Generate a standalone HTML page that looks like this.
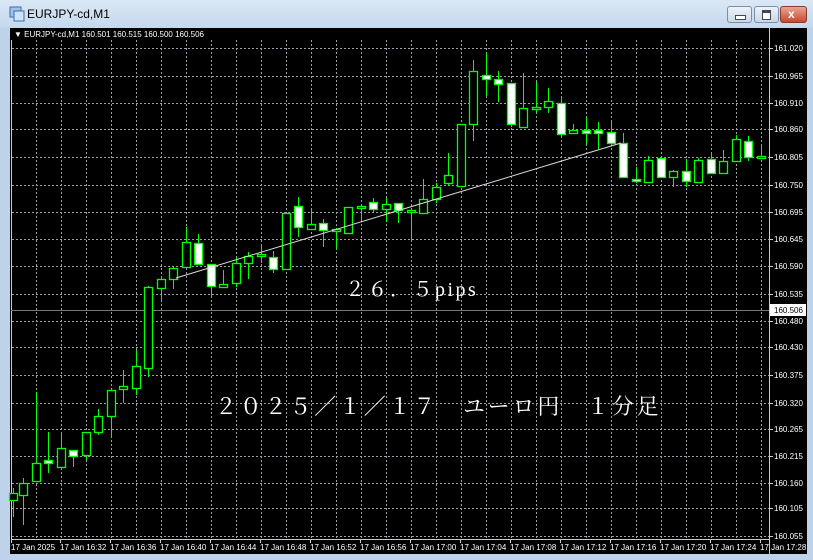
<!DOCTYPE html>
<html><head><meta charset="utf-8"><style>
html,body{margin:0;padding:0;width:813px;height:560px;overflow:hidden;background:#bcd3ea;font-family:"Liberation Sans",sans-serif}
#title{position:absolute;left:0;top:0;width:813px;height:28px;background:linear-gradient(#dbe8f5,#c4d8ee)}
#tt{position:absolute;left:27px;top:7px;font-size:12px;color:#000}
.btn{position:absolute;top:6px;height:15px;border:1px solid #7c8ea6;border-radius:3px;background:linear-gradient(#eef3f9,#c9d7e8)}
#chart{position:absolute;left:10px;top:28px;width:797px;height:526px;background:#000}
svg text{font-family:"Liberation Sans",sans-serif}
</style></head><body>
<div id="title">
<svg style="position:absolute;left:9px;top:6px" width="16" height="16"><rect x="1" y="1" width="11" height="10" fill="#9fc3e8" stroke="#3b6ea5"/><rect x="5" y="5" width="10" height="10" fill="#cfe3f7" stroke="#3b6ea5"/></svg>
<div id="tt">EURJPY-cd,M1</div>
<div class="btn" style="left:727px;width:23px"><div style="position:absolute;left:7px;top:8px;width:9px;height:3px;background:#fff;border:1px solid #445"></div></div>
<div class="btn" style="left:754px;width:23px"><div style="position:absolute;left:7px;top:3px;width:7px;height:6px;border:1px solid #445;border-top:3px solid #445;background:#fff"></div></div>
<div class="btn" style="left:780px;width:25px;background:linear-gradient(#e9a393,#c6492f);border-color:#8b3a2c"><div style="position:absolute;left:7px;top:0px;color:#fff;font-weight:bold;font-size:12px">x</div></div>
</div>
<div id="chart"></div>
<svg id="s" style="position:absolute;left:0;top:0" width="813" height="560"></svg>
<div style="position:absolute;left:345px;top:273px;color:#fff;font-family:'Liberation Serif','Noto Serif CJK JP',serif;font-size:20px;letter-spacing:2.5px;white-space:nowrap">２６．５pips</div>
<div style="position:absolute;left:215px;top:390px;color:#fff;font-family:'Liberation Serif','Noto Serif CJK JP',serif;font-size:22px;letter-spacing:2.8px;white-space:nowrap">２０２５／１／１７　ユーロ円　１分足</div>
<script>
var s='';
var py=[["161.020",48],["160.965",76],["160.910",103],["160.860",129],["160.805",157],["160.750",185],["160.695",212],["160.645",239],["160.590",266],["160.535",294],["160.480",321],["160.430",347],["160.375",375],["160.320",403],["160.265",429],["160.215",456],["160.160",483],["160.105",508],["160.055",536]];
py.forEach(function(p){s+='<line x1="12" x2="769" y1="'+(p[1]+.5)+'" y2="'+(p[1]+.5)+'" stroke="#9a9fa8" stroke-dasharray="2,2"/>';s+='<line x1="769" x2="773" y1="'+(p[1]+.5)+'" y2="'+(p[1]+.5)+'" stroke="#ccc"/>';s+='<text x="774" y="'+(p[1]+3)+'" font-size="8" fill="#fff">'+p[0]+'</text>';});
for(var k=0;k<30;k++){var x=36+25*k+.5;s+='<line x1="'+x+'" x2="'+x+'" y1="40" y2="539" stroke="#9a9fa8" stroke-dasharray="2,2"/>';}
s+='<line x1="11.5" x2="11.5" y1="40" y2="539" stroke="#ccc"/><line x1="11" x2="770" y1="539.5" y2="539.5" stroke="#ccc"/><line x1="769.5" x2="769.5" y1="28" y2="554" stroke="#ccc"/>';
s+='<line x1="11" x2="769" y1="310.5" y2="310.5" stroke="#777"/>';
s+='<rect x="770" y="304" width="36" height="12" fill="#fff"/><text x="774" y="313" font-size="8" fill="#000">160.506</text>';
var t=["17 Jan 2025","17 Jan 16:32","17 Jan 16:36","17 Jan 16:40","17 Jan 16:44","17 Jan 16:48","17 Jan 16:52","17 Jan 16:56","17 Jan 17:00","17 Jan 17:04","17 Jan 17:08","17 Jan 17:12","17 Jan 17:16","17 Jan 17:20","17 Jan 17:24","17 Jan 17:28"];
t.forEach(function(l,i){var x=i==0?11:10+50*i;s+='<line x1="'+(x+.5)+'" x2="'+(x+.5)+'" y1="539" y2="543" stroke="#ccc"/><text x="'+x+'" y="550" font-size="8" fill="#fff">'+l+'</text>';});
s+='<text x="14" y="37" font-size="8" fill="#fff">▼ EURJPY-cd,M1  160.501 160.515 160.500 160.506</text>';
var d=[[13,488,517,493,500,1],[23,478,525,483,495,1],[36,392,481,463,481,1],[48,432,473,460,463,0],[61,432,467,448,467,1],[73,450,467,450,456,0],[86,432,460,432,455,1],[98,409,435,416,432,1],[111,390,438,390,416,1],[123,370,403,386,389,1],[136,350,395,366,388,1],[148,286,377,287,368,1],[161,276,300,279,288,1],[173,266,289,268,279,1],[186,227,267,242,267,1],[198,234,265,243,264,0],[211,264,296,264,286,0],[223,270,287,284,287,1],[236,257,287,263,283,1],[248,252,279,256,263,1],[261,244,263,254,256,1],[273,251,273,257,269,0],[286,213,269,213,269,1],[298,197,237,206,227,0],[311,210,229,224,229,1],[323,219,247,223,230,0],[336,228,249,229,231,1],[348,207,233,207,233,1],[361,206,222,206,208,1],[373,198,213,202,209,0],[386,198,222,204,209,1],[398,203,223,203,210,0],[411,211,242,210,212,1],[423,179,213,199,213,1],[436,183,203,187,199,1],[448,153,186,175,183,1],[461,124,186,124,186,1],[473,60,141,71,124,1],[486,53,96,75,79,0],[498,71,102,79,84,0],[511,83,127,83,124,0],[523,73,127,108,127,1],[536,82,113,107,109,1],[548,88,113,101,107,1],[561,98,136,103,134,0],[573,124,133,130,133,1],[586,117,145,130,133,0],[598,122,149,130,133,0],[611,122,143,132,143,0],[623,133,177,143,177,0],[636,167,183,179,181,0],[648,156,182,160,182,1],[661,158,177,158,177,0],[673,170,187,171,177,1],[686,159,187,171,181,0],[698,158,182,160,182,1],[711,153,174,159,173,0],[723,150,173,161,173,1],[736,135,161,139,161,1],[748,136,161,141,157,0],[761,145,157,156,158,1]];
d.forEach(function(c){var x=c[0]+.5;s+='<line x1="'+x+'" x2="'+x+'" y1="'+c[1]+'" y2="'+c[2]+'" stroke="#00ff00"/>';var h=Math.max(c[4]-c[3],1);s+='<rect x="'+(c[0]-3.5)+'" y="'+(c[3]+.5)+'" width="8" height="'+h+'" fill="'+(c[5]?'#000':'#fff')+'" stroke="#00ff00" stroke-width="1.3"/>';});
s+='<line x1="176" y1="278" x2="621" y2="143" stroke="#ddd" stroke-width="1"/>';
document.getElementById('s').innerHTML=s;
</script>
</body></html>
